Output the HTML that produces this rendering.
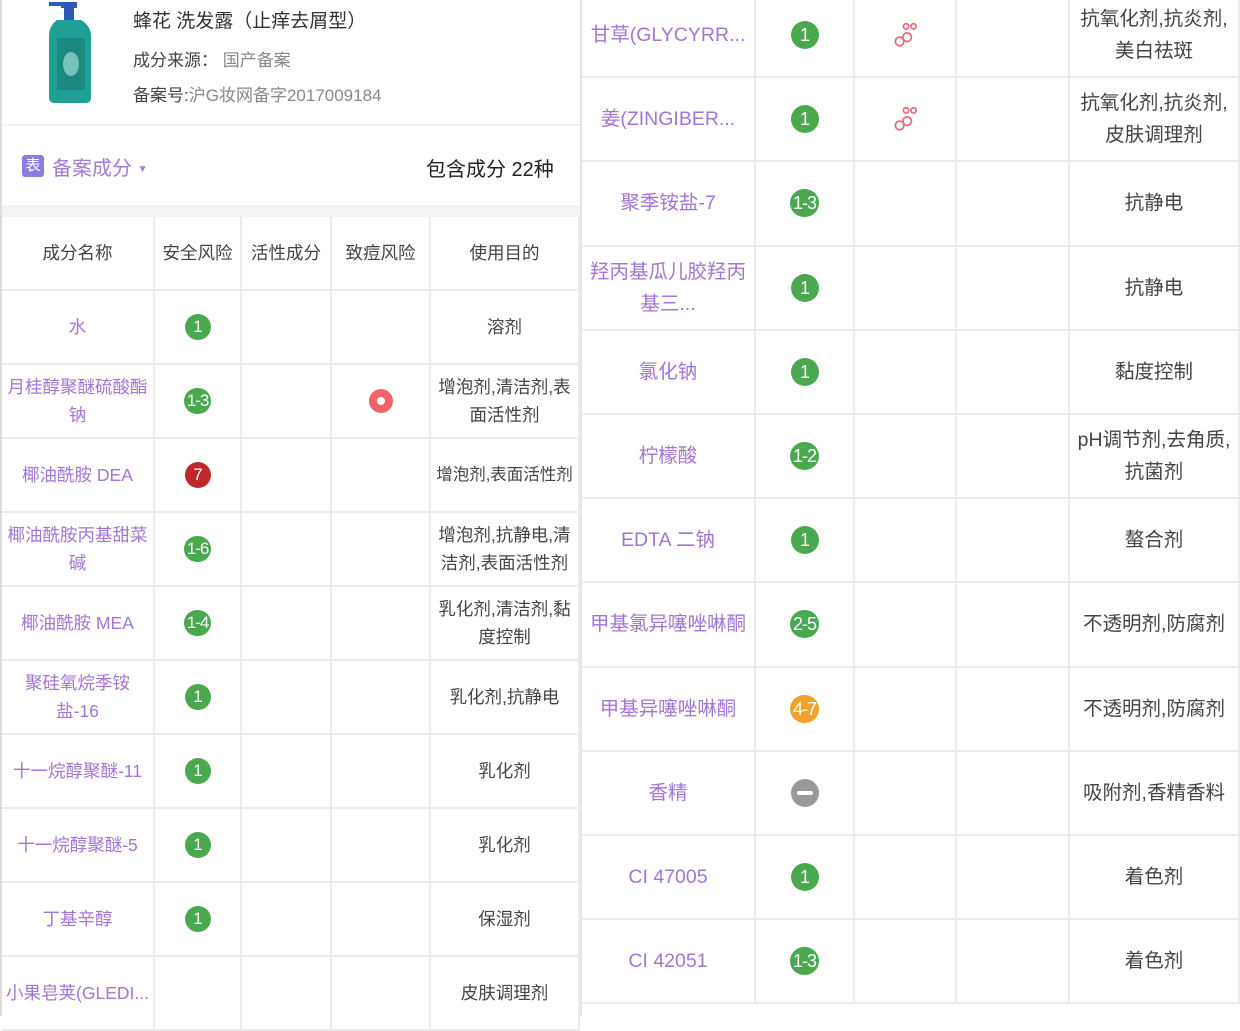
<!DOCTYPE html>
<html><head><meta charset="utf-8"><style>
*{margin:0;padding:0;box-sizing:border-box}
body{width:1240px;height:1016px;background:#fff;position:relative;overflow:hidden;font-family:"Liberation Sans","Noto Sans CJK SC",sans-serif;color:#444}
.abs{position:absolute}
.tbl{position:absolute;display:grid}
.c{border-right:2px solid #ececec;border-bottom:2px solid #ececec;display:flex;align-items:center;justify-content:center;text-align:center;font-size:17.5px;line-height:28px;background:#fff;white-space:nowrap;overflow:hidden}
.R .c{font-size:19.5px;line-height:32px}
.n{color:#a375d6}
.b{display:inline-block;height:26px;min-width:26px;border-radius:13px;background:#4aa84e;color:#fff;font-size:17px;line-height:26px;padding:0 3px;letter-spacing:-1px}
.R .b{height:28px;min-width:28px;border-radius:14px;line-height:28px;font-size:18px}
.r7{background:#c0282a}
.o{background:#f2a22a}
.g{background:#999;width:28px;height:28px;border-radius:14px;position:relative}
.g:after{content:"";position:absolute;left:6px;top:12px;width:16px;height:4px;background:#fff;border-radius:2px}
.dot{width:24px;height:24px;border-radius:12px;background:#ef6467;position:relative}
.dot:after{content:"";position:absolute;left:8px;top:8px;width:8px;height:8px;border-radius:4px;background:#fff}
</style></head><body>
<div class="abs" style="left:0;top:0;width:2px;height:1016px;background:#ddd"></div>
<svg class="abs" style="left:45px;top:2px" width="55" height="102" viewBox="0 0 55 102">
<rect x="16" y="0" width="16" height="6" fill="#2a5bb8"/><rect x="19" y="6" width="10" height="12" fill="#2a5bb8"/>
<rect x="4" y="0" width="14" height="4" fill="#2a5bb8"/>
<path d="M12 18 h24 q10 6 10 16 v62 q0 5 -6 5 h-30 q-6 0 -6 -5 v-62 q0 -10 8 -16z" fill="#1f9f95"/>
<rect x="12" y="36" width="28" height="52" fill="#17776f" opacity=".55"/>
<ellipse cx="26" cy="62" rx="8" ry="12" fill="#cfe" opacity=".5"/>
</svg>
<div class="abs" style="left:133px;top:6px;font-size:19px;color:#333">蜂花 洗发露（止痒去屑型）</div>
<div class="abs" style="left:133px;top:46px;font-size:17px;color:#444">成分来源：&nbsp;<span style="color:#888">国产备案</span></div>
<div class="abs" style="left:133px;top:81px;font-size:17px;color:#444">备案号:<span style="color:#888">沪G妆网备字2017009184</span></div>
<div class="abs" style="left:2px;top:124px;width:578px;height:2px;background:#f2f2f2"></div>
<div class="abs" style="left:22px;top:155px;width:22px;height:22px;background:#8c7ee0;border-radius:3px;color:#fff;font-size:15px;text-align:center;line-height:22px">表</div>
<div class="abs" style="left:52px;top:152px;font-size:20px;color:#a37ad8">备案成分 <span style="font-size:10px;vertical-align:middle">▼</span></div>
<div class="abs" style="left:426px;top:153px;font-size:20px;color:#222">包含成分 22种</div>
<div class="abs" style="left:2px;top:205px;width:578px;height:12px;background:#f3f3f3"></div>
<div class="abs" style="left:580px;top:0;width:2px;height:1016px;background:#e4e4e4"></div>

<div class="tbl" style="left:2px;top:217px;width:578px;grid-template-columns:153px 87px 90px 99px 149px;grid-auto-rows:74px">
<div class="c">成分名称</div><div class="c">安全风险</div><div class="c">活性成分</div><div class="c">致痘风险</div><div class="c">使用目的</div>
<div class="c n">水</div><div class="c"><span class="b">1</span></div><div class="c"></div><div class="c"></div><div class="c">溶剂</div>
<div class="c n">月桂醇聚醚硫酸酯<br>钠</div><div class="c"><span class="b">1-3</span></div><div class="c"></div><div class="c"><span class="dot"></span></div><div class="c">增泡剂,清洁剂,表<br>面活性剂</div>
<div class="c n">椰油酰胺 DEA</div><div class="c"><span class="b r7">7</span></div><div class="c"></div><div class="c"></div><div class="c" style="font-size:16.5px">增泡剂,表面活性剂</div>
<div class="c n">椰油酰胺丙基甜菜<br>碱</div><div class="c"><span class="b">1-6</span></div><div class="c"></div><div class="c"></div><div class="c">增泡剂,抗静电,清<br>洁剂,表面活性剂</div>
<div class="c n">椰油酰胺 MEA</div><div class="c"><span class="b">1-4</span></div><div class="c"></div><div class="c"></div><div class="c">乳化剂,清洁剂,黏<br>度控制</div>
<div class="c n">聚硅氧烷季铵<br>盐-16</div><div class="c"><span class="b">1</span></div><div class="c"></div><div class="c"></div><div class="c">乳化剂,抗静电</div>
<div class="c n">十一烷醇聚醚-11</div><div class="c"><span class="b">1</span></div><div class="c"></div><div class="c"></div><div class="c">乳化剂</div>
<div class="c n">十一烷醇聚醚-5</div><div class="c"><span class="b">1</span></div><div class="c"></div><div class="c"></div><div class="c">乳化剂</div>
<div class="c n">丁基辛醇</div><div class="c"><span class="b">1</span></div><div class="c"></div><div class="c"></div><div class="c">保湿剂</div>
<div class="c n">小果皂荚(GLEDI...</div><div class="c"></div><div class="c"></div><div class="c"></div><div class="c">皮肤调理剂</div>
</div>

<div class="tbl R" style="left:582px;top:-6px;width:658px;grid-template-columns:174px 99px 102px 113px 170px;grid-auto-rows:84.2px">
<div class="c n">甘草(GLYCYRR...</div><div class="c"><span class="b">1</span></div><div class="c"><svg width="30" height="30" viewBox="0 0 28 28" fill="none" stroke="#e46a7a" stroke-width="1.6"><circle cx="9" cy="20" r="4"/><circle cx="16" cy="16" r="4"/><circle cx="15" cy="6" r="2.5"/><circle cx="22" cy="6" r="2.5"/></svg></div><div class="c"></div><div class="c">抗氧化剂,抗炎剂,<br>美白祛斑</div>
<div class="c n">姜(ZINGIBER...</div><div class="c"><span class="b">1</span></div><div class="c"><svg width="30" height="30" viewBox="0 0 28 28" fill="none" stroke="#e46a7a" stroke-width="1.6"><circle cx="9" cy="20" r="4"/><circle cx="16" cy="16" r="4"/><circle cx="15" cy="6" r="2.5"/><circle cx="22" cy="6" r="2.5"/></svg></div><div class="c"></div><div class="c">抗氧化剂,抗炎剂,<br>皮肤调理剂</div>
<div class="c n">聚季铵盐-7</div><div class="c"><span class="b">1-3</span></div><div class="c"></div><div class="c"></div><div class="c">抗静电</div>
<div class="c n">羟丙基瓜儿胶羟丙<br>基三...</div><div class="c"><span class="b">1</span></div><div class="c"></div><div class="c"></div><div class="c">抗静电</div>
<div class="c n">氯化钠</div><div class="c"><span class="b">1</span></div><div class="c"></div><div class="c"></div><div class="c">黏度控制</div>
<div class="c n">柠檬酸</div><div class="c"><span class="b">1-2</span></div><div class="c"></div><div class="c"></div><div class="c">pH调节剂,去角质,<br>抗菌剂</div>
<div class="c n">EDTA 二钠</div><div class="c"><span class="b">1</span></div><div class="c"></div><div class="c"></div><div class="c">螯合剂</div>
<div class="c n">甲基氯异噻唑啉酮</div><div class="c"><span class="b">2-5</span></div><div class="c"></div><div class="c"></div><div class="c">不透明剂,防腐剂</div>
<div class="c n">甲基异噻唑啉酮</div><div class="c"><span class="b o">4-7</span></div><div class="c"></div><div class="c"></div><div class="c">不透明剂,防腐剂</div>
<div class="c n">香精</div><div class="c"><span class="g"></span></div><div class="c"></div><div class="c"></div><div class="c">吸附剂,香精香料</div>
<div class="c n">CI 47005</div><div class="c"><span class="b">1</span></div><div class="c"></div><div class="c"></div><div class="c">着色剂</div>
<div class="c n">CI 42051</div><div class="c"><span class="b">1-3</span></div><div class="c"></div><div class="c"></div><div class="c">着色剂</div>
</div>
</body></html>
